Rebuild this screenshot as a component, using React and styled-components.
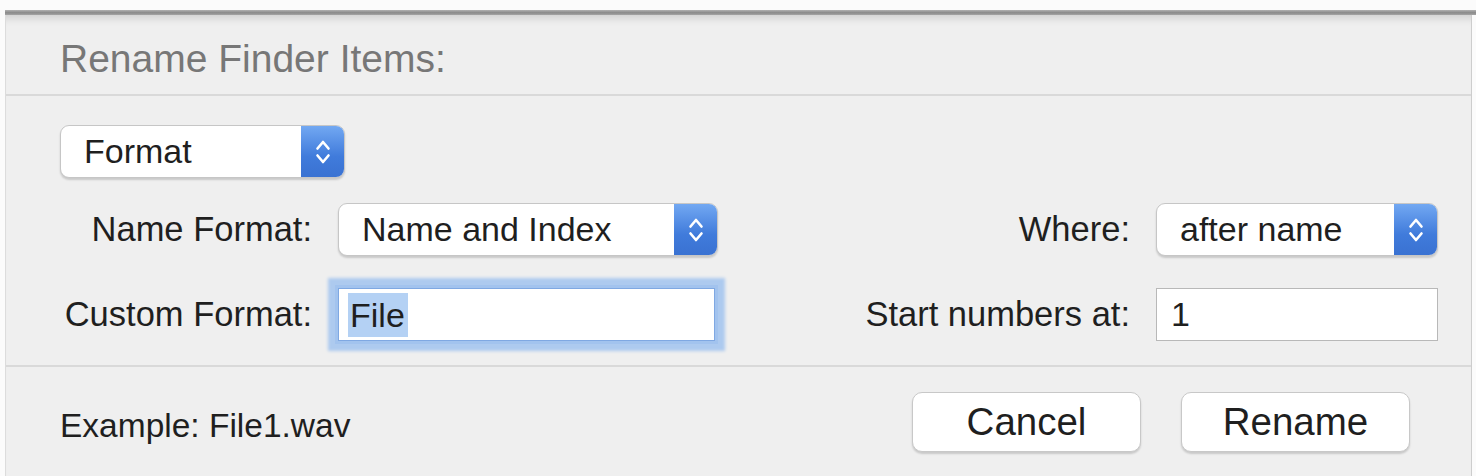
import React from "react";
import styled, { createGlobalStyle, css } from "styled-components";

const GlobalStyle = createGlobalStyle`
  html, body {
    margin: 0;
    padding: 0;
    background: #fbfbfb;
  }
  body {
    font-family: "Liberation Sans", Arial, sans-serif;
  }
`;

const Chevrons = () => (
  <svg width="16" height="28" viewBox="0 0 16 28" fill="none">
    <polyline
      points="2.5,10.5 8,4 13.5,10.5"
      stroke="#fff"
      strokeWidth="2.6"
      strokeLinecap="round"
      strokeLinejoin="round"
    />
    <polyline
      points="2.5,17.5 8,24 13.5,17.5"
      stroke="#fff"
      strokeWidth="2.6"
      strokeLinecap="round"
      strokeLinejoin="round"
    />
  </svg>
);

const PopUp = ({ width, children }) => (
  <PopupBox $w={width}>
    <PopupText>{children}</PopupText>
    <Stepper>
      <Chevrons />
    </Stepper>
  </PopupBox>
);

const App = () => {
  return (
    <Page>
      <GlobalStyle />
      <TopEdge />
      <Dialog>
        <Header>
          <Title>Rename Finder Items:</Title>
        </Header>

        <Body>
          <PopUp width={285}>Format</PopUp>

          <Form>
            <Label>Name Format:</Label>
            <PopUp width={380}>Name and Index</PopUp>
            <span />
            <Label>Where:</Label>
            <PopUp width={282}>after name</PopUp>

            <Label>Custom Format:</Label>
            <TextField $focused>
              <Selection>File</Selection>
            </TextField>
            <span />
            <Label>Start numbers at:</Label>
            <TextField>1</TextField>
          </Form>
        </Body>

        <Footer>
          <Example>Example: File1.wav</Example>
          <Buttons>
            <PushButton>Cancel</PushButton>
            <PushButton>Rename</PushButton>
          </Buttons>
        </Footer>
      </Dialog>
    </Page>
  );
};

const Page = styled.div`
  width: 1476px;
  height: 476px;
  overflow: hidden;
  box-sizing: border-box;
  padding-top: 10px;
  background: #fbfbfb;
  display: flex;
  flex-direction: column;
`;

const TopEdge = styled.div`
  height: 5px;
  margin-left: 5px;
  background: linear-gradient(#b2b2b2, #8a8a8a 55%, #a6a6a6);
`;

const Dialog = styled.div`
  flex: 1;
  width: 1467px;
  margin-left: 5px;
  box-sizing: border-box;
  background: #efefef;
  border-left: 1px solid #dcdcdc;
  border-right: 1px solid #cdcdcd;
  box-shadow: inset 0 10px 9px -7px rgba(0, 0, 0, 0.14);
  display: flex;
  flex-direction: column;
`;

const Header = styled.div`
  height: 81px;
  box-sizing: border-box;
  padding: 8px 0 0 54px;
  display: flex;
  align-items: center;
  border-bottom: 2px solid #d9d9d9;
`;

const Title = styled.h1`
  margin: 0;
  font-size: 39px;
  font-weight: 400;
  color: #777;
`;

const Body = styled.div`
  padding: 29px 33px 24px 54px;
  border-bottom: 2px solid #d9d9d9;
`;

const Form = styled.div`
  margin-top: 25px;
  display: grid;
  grid-template-columns: 252px 380px 1fr auto 282px;
  column-gap: 26px;
  row-gap: 32px;
  align-items: center;
`;

const Label = styled.span`
  justify-self: end;
  font-size: 34.5px;
  color: #1f1f1f;
  white-space: nowrap;
`;

const PopupBox = styled.div`
  width: ${(p) => p.$w}px;
  height: 53px;
  box-sizing: border-box;
  display: flex;
  background: #fff;
  border: 1px solid #c6c6c6;
  border-radius: 9px;
  box-shadow: 0 2px 2px rgba(0, 0, 0, 0.16);
  overflow: hidden;
`;

const PopupText = styled.span`
  flex: 1;
  display: flex;
  align-items: center;
  padding-left: 23px;
  font-size: 34px;
  color: #1f1f1f;
  white-space: nowrap;
`;

const Stepper = styled.span`
  width: 43px;
  display: flex;
  align-items: center;
  justify-content: center;
  background: linear-gradient(#72a8f2, #407bdb 60%, #3a72d2);
`;

const TextField = styled.div`
  height: 53px;
  box-sizing: border-box;
  display: flex;
  align-items: center;
  padding-left: 14px;
  background: #fff;
  border: 1px solid #b8b8b8;
  font-size: 34px;
  color: #1f1f1f;

  ${(p) =>
    p.$focused &&
    css`
      padding-left: 9px;
      margin-right: 3px;
      border-color: #7fa8e2;
      box-shadow: 0 0 0 3px #a2c3ee, 0 0 3px 10px #adcaef;
    `}
`;

const Selection = styled.span`
  display: inline-block;
  line-height: 44px;
  padding: 0 3px 0 2px;
  background: #b4d1f4;
`;

const Footer = styled.div`
  flex: 1;
  display: flex;
  align-items: flex-start;
  padding: 25px 61px 0 54px;
`;

const Example = styled.span`
  padding-top: 15px;
  font-size: 33.5px;
  color: #1f1f1f;
`;

const Buttons = styled.div`
  margin-left: auto;
  display: flex;
  gap: 40px;
`;

const PushButton = styled.button`
  width: 229px;
  height: 60px;
  padding: 0;
  font-family: inherit;
  font-size: 38.5px;
  color: #1f1f1f;
  background: #fff;
  border: 1px solid #c8c8c8;
  border-radius: 10px;
  box-shadow: 0 2px 2px rgba(0, 0, 0, 0.16);
`;

export default App;
